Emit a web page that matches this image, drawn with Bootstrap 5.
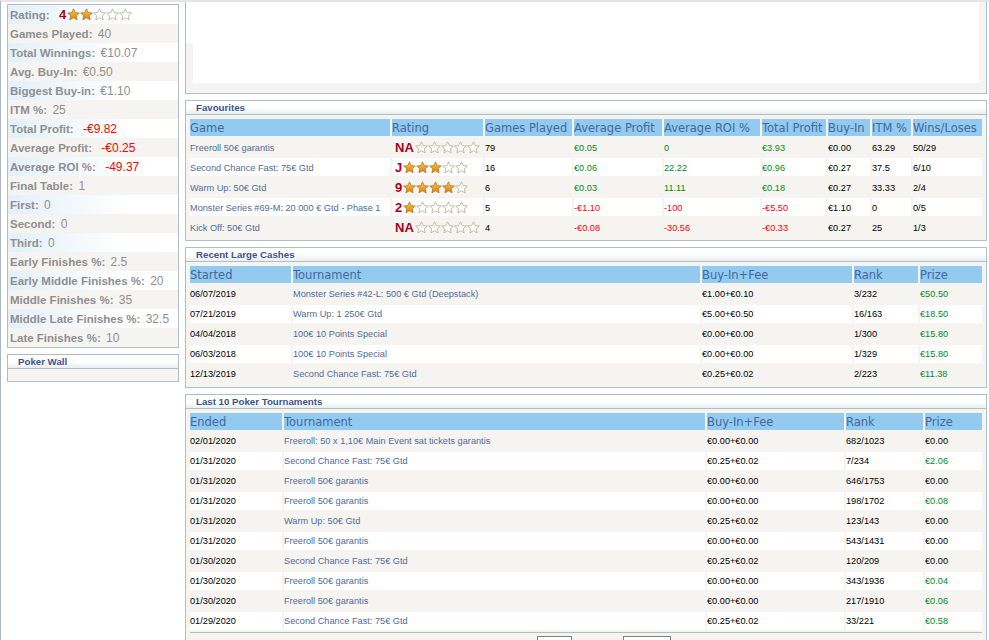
<!DOCTYPE html>
<html lang="en"><head><meta charset="utf-8"><title>Poker profile</title>
<link href="https://cdn.jsdelivr.net/npm/bootstrap@5.3.0/dist/css/bootstrap.min.css" rel="stylesheet">
<style>
html,body{height:640px;overflow:hidden;background:#fff}
body{font-family:"Liberation Sans",Arial,sans-serif;font-size:9px;color:#000}
.pagewrap{border-left:1px solid #aab6c2;border-top:2px solid #e4e4e4;padding-left:6px;gap:6px;height:640px;width:989px}
.sidecol{width:172px;flex:none;padding-top:2px}
.maincol{width:802px;flex:none}
.pane{border:1px solid #b0bec8;background:#f6f4f1;margin-bottom:6px}
.pane-head{height:14px;line-height:13px;padding-left:10px;font-size:9.7px;font-weight:700;color:#3c5390;background:linear-gradient(#fff,#fff 50%,#e9eef0);border-bottom:1px solid #b0bec8}
.stat-row{height:19px;line-height:19px;padding:1px 0 0 2px;font-size:12px;color:#8f8f8f;white-space:nowrap;background:#f6f4f1}
.stat-row:nth-child(odd){background:linear-gradient(90deg,#e3f0fa,#fff 70%)}
.stat-row b{margin-right:2px;font-size:11.5px}
.stat-row .neg{margin-left:4px}
.neg{color:#f00}
.pos{color:#008a1e}
.rate{font-size:13px;font-weight:700;color:#a80020;padding-left:4px;padding-right:1px;line-height:1}
.stars{display:inline-flex;vertical-align:-2px}
.stars svg{width:13px;height:13px;display:block}
.svgdefs{position:absolute}
.wall-body{height:12px}
.top-pane{height:92px;padding:0 7px 10px;border-top:0;background:#f6f4f1 linear-gradient(#fff,#fff) no-repeat left top/7px 41px}
.top-inner{height:81px;background:#fff}
.dtab{table-layout:fixed;border-collapse:separate;border-spacing:2px;margin:0;width:796px;--bs-table-bg:transparent}
.dtab th,.dtab td{padding:0;border:0;box-shadow:none;white-space:nowrap;overflow:hidden;vertical-align:middle;background:transparent}
.dtab th{height:17px;background:#92caf0;font-family:"DejaVu Sans",Verdana,sans-serif;font-weight:400;font-size:11.5px;color:#44689f;line-height:15px;padding-top:2px}
.dtab td{height:18px;font-size:9.2px;line-height:18px;color:#000}
.dtab tbody tr:nth-child(even) td{background:#fff}
.dtab a{color:#4f6b9c;text-decoration:none}
.dtab td.neg{color:#f00}
.dtab td.pos{color:#008a1e}
.tabwrap{padding:2px 2px 2px 2px}
.fav .c1{width:200px}.fav .c2{width:91px}.fav .c3{width:87px}.fav .c4{width:88px}.fav .c5{width:96px}.fav .c6{width:64px}.fav .c7{width:42px}.fav .c8{width:39px}.fav .c9{width:69px}
.big .c1{width:101px}.big .c2{width:407px}.big .c3{width:150px}.big .c4{width:64px}.big .c5{width:62px}
.last .c1{width:92px}.last .c2{width:421px}.last .c3{width:137px}.last .c4{width:77px}.last .c5{width:57px}
.dtab.fav td{line-height:16px;padding-top:2px}
.dtab.fav td.rt{line-height:14px;padding:3px 0 0 3px;vertical-align:top}
.fav td.rt .rate{padding:0 1px 0 0}
.pager{border-top:1px solid #b0bec8;margin:0 2px;height:30px;padding-left:347px;gap:51px}
.pbox{height:20px;border:1px solid #808080;margin-top:3px;background:#fff}
.pb1{width:35px}.pb2{width:48px}
</style></head><body>
<svg width="0" height="0" class="svgdefs"><defs>
<linearGradient id="gold" x1="0" y1="0" x2="0" y2="1"><stop offset="0" stop-color="#fcc84e"/><stop offset="1" stop-color="#e07c0a"/></linearGradient>
<symbol id="son" viewBox="0 0 24 24"><path d="M12 1.500l3.200 7 7.600.8-5.700 5.100 1.600 7.500L12 18l-6.700 3.900 1.600-7.500L1.200 9.300l7.600-.8z" fill="url(#gold)" stroke="#a8701c" stroke-width="1.300"/></symbol>
<symbol id="soff" viewBox="0 0 24 24"><path d="M12 1.500l3.200 7 7.600.8-5.700 5.100 1.600 7.500L12 18l-6.700 3.900 1.600-7.500L1.200 9.300l7.600-.8z" fill="#fff" stroke="#b4b49a" stroke-width="1.600"/></symbol>
</defs></svg>
<div class="d-flex pagewrap" id="pg">
<aside class="sidecol">
<div class="pane">
<div class="stat-row"><b>Rating:</b> <span class="rate">4</span><span class="stars" data-n="2"></span></div>
<div class="stat-row"><b>Games Played:</b> 40</div>
<div class="stat-row"><b>Total Winnings:</b> €10.07</div>
<div class="stat-row"><b>Avg. Buy-In:</b> €0.50</div>
<div class="stat-row"><b>Biggest Buy-in:</b> €1.10</div>
<div class="stat-row"><b>ITM %:</b> 25</div>
<div class="stat-row"><b>Total Profit:</b> <span class="neg">-€9.82</span></div>
<div class="stat-row"><b>Average Profit:</b> <span class="neg">-€0.25</span></div>
<div class="stat-row"><b>Average ROI %:</b> <span class="neg">-49.37</span></div>
<div class="stat-row"><b>Final Table:</b> 1</div>
<div class="stat-row"><b>First:</b> 0</div>
<div class="stat-row"><b>Second:</b> 0</div>
<div class="stat-row"><b>Third:</b> 0</div>
<div class="stat-row"><b>Early Finishes %:</b> 2.5</div>
<div class="stat-row"><b>Early Middle Finishes %:</b> 20</div>
<div class="stat-row"><b>Middle Finishes %:</b> 35</div>
<div class="stat-row"><b>Middle Late Finishes %:</b> 32.5</div>
<div class="stat-row"><b>Late Finishes %:</b> 10</div>
</div>
<div class="pane"><div class="pane-head">Poker Wall</div><div class="wall-body"></div></div>
</aside>
<main class="maincol">
<div class="pane top-pane"><div class="top-inner"></div></div>
<div class="pane"><div class="pane-head">Favourites</div><div class="tabwrap">
<table class="table dtab fav"><colgroup><col class="c1"><col class="c2"><col class="c3"><col class="c4"><col class="c5"><col class="c6"><col class="c7"><col class="c8"><col class="c9"></colgroup>
<thead><tr><th>Game</th><th>Rating</th><th>Games Played</th><th>Average Profit</th><th>Average ROI %</th><th>Total Profit</th><th>Buy-In</th><th>ITM %</th><th>Wins/Loses</th></tr></thead>
<tbody>
<tr><td><a href="#">Freeroll 50€ garantis</a></td><td class="rt"><span class="rate">NA</span><span class="stars" data-n="0"></span></td><td>79</td><td class="pos">€0.05</td><td class="pos">0</td><td class="pos">€3.93</td><td>€0.00</td><td>63.29</td><td>50/29</td></tr>
<tr><td><a href="#">Second Chance Fast: 75€ Gtd</a></td><td class="rt"><span class="rate">J</span><span class="stars" data-n="3"></span></td><td>16</td><td class="pos">€0.06</td><td class="pos">22.22</td><td class="pos">€0.96</td><td>€0.27</td><td>37.5</td><td>6/10</td></tr>
<tr><td><a href="#">Warm Up: 50€ Gtd</a></td><td class="rt"><span class="rate">9</span><span class="stars" data-n="4"></span></td><td>6</td><td class="pos">€0.03</td><td class="pos">11.11</td><td class="pos">€0.18</td><td>€0.27</td><td>33.33</td><td>2/4</td></tr>
<tr><td><a href="#">Monster Series #69-M: 20 000 € Gtd - Phase 1</a></td><td class="rt"><span class="rate">2</span><span class="stars" data-n="1"></span></td><td>5</td><td class="neg">-€1.10</td><td class="neg">-100</td><td class="neg">-€5.50</td><td>€1.10</td><td>0</td><td>0/5</td></tr>
<tr><td><a href="#">Kick Off: 50€ Gtd</a></td><td class="rt"><span class="rate">NA</span><span class="stars" data-n="0"></span></td><td>4</td><td class="neg">-€0.08</td><td class="neg">-30.56</td><td class="neg">-€0.33</td><td>€0.27</td><td>25</td><td>1/3</td></tr>
</tbody></table></div></div>
<div class="pane"><div class="pane-head">Recent Large Cashes</div><div class="tabwrap">
<table class="table dtab big"><colgroup><col class="c1"><col class="c2"><col class="c3"><col class="c4"><col class="c5"></colgroup>
<thead><tr><th>Started</th><th>Tournament</th><th>Buy-In+Fee</th><th>Rank</th><th>Prize</th></tr></thead>
<tbody>
<tr><td>06/07/2019</td><td><a href="#">Monster Series #42-L: 500 € Gtd (Deepstack)</a></td><td>€1.00+€0.10</td><td>3/232</td><td class="pos">€50.50</td></tr>
<tr><td>07/21/2019</td><td><a href="#">Warm Up: 1 250€ Gtd</a></td><td>€5.00+€0.50</td><td>16/163</td><td class="pos">€18.50</td></tr>
<tr><td>04/04/2018</td><td><a href="#">100€ 10 Points Special</a></td><td>€0.00+€0.00</td><td>1/300</td><td class="pos">€15.80</td></tr>
<tr><td>06/03/2018</td><td><a href="#">100€ 10 Points Special</a></td><td>€0.00+€0.00</td><td>1/329</td><td class="pos">€15.80</td></tr>
<tr><td>12/13/2019</td><td><a href="#">Second Chance Fast: 75€ Gtd</a></td><td>€0.25+€0.02</td><td>2/223</td><td class="pos">€11.38</td></tr>
</tbody></table></div></div>
<div class="pane"><div class="pane-head">Last 10 Poker Tournaments</div><div class="tabwrap pb-0">
<table class="table dtab last"><colgroup><col class="c1"><col class="c2"><col class="c3"><col class="c4"><col class="c5"></colgroup>
<thead><tr><th>Ended</th><th>Tournament</th><th>Buy-In+Fee</th><th>Rank</th><th>Prize</th></tr></thead>
<tbody>
<tr><td>02/01/2020</td><td><a href="#">Freeroll: 50 x 1,10€ Main Event sat tickets garantis</a></td><td>€0.00+€0.00</td><td>682/1023</td><td>€0.00</td></tr>
<tr><td>01/31/2020</td><td><a href="#">Second Chance Fast: 75€ Gtd</a></td><td>€0.25+€0.02</td><td>7/234</td><td class="pos">€2.06</td></tr>
<tr><td>01/31/2020</td><td><a href="#">Freeroll 50€ garantis</a></td><td>€0.00+€0.00</td><td>646/1753</td><td>€0.00</td></tr>
<tr><td>01/31/2020</td><td><a href="#">Freeroll 50€ garantis</a></td><td>€0.00+€0.00</td><td>198/1702</td><td class="pos">€0.08</td></tr>
<tr><td>01/31/2020</td><td><a href="#">Warm Up: 50€ Gtd</a></td><td>€0.25+€0.02</td><td>123/143</td><td>€0.00</td></tr>
<tr><td>01/31/2020</td><td><a href="#">Freeroll 50€ garantis</a></td><td>€0.00+€0.00</td><td>543/1431</td><td>€0.00</td></tr>
<tr><td>01/30/2020</td><td><a href="#">Second Chance Fast: 75€ Gtd</a></td><td>€0.25+€0.02</td><td>120/209</td><td>€0.00</td></tr>
<tr><td>01/30/2020</td><td><a href="#">Freeroll 50€ garantis</a></td><td>€0.00+€0.00</td><td>343/1936</td><td class="pos">€0.04</td></tr>
<tr><td>01/30/2020</td><td><a href="#">Freeroll 50€ garantis</a></td><td>€0.00+€0.00</td><td>217/1910</td><td class="pos">€0.06</td></tr>
<tr><td>01/29/2020</td><td><a href="#">Second Chance Fast: 75€ Gtd</a></td><td>€0.25+€0.02</td><td>33/221</td><td class="pos">€0.58</td></tr>
</tbody></table>
<div class="d-flex pager"><div class="pbox pb1"></div><div class="pbox pb2"></div></div>
</div></div>
</main>
</div>
<script>
document.querySelectorAll('.stars').forEach(function(s){var n=+s.dataset.n,h='';for(var i=0;i<5;i++){h+='<svg aria-hidden="true"><use href="#'+(i<n?'son':'soff')+'"/></svg>';}s.innerHTML=h;});
</script>
<script src="https://cdn.jsdelivr.net/npm/bootstrap@5.3.0/dist/js/bootstrap.bundle.min.js"></script>
</body></html>
